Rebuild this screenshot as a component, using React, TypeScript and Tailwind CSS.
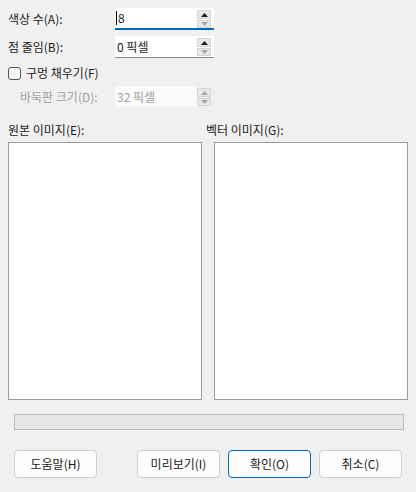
import React from "react";

function Spin({ upOn, downOn }: { upOn: boolean; downOn: boolean }) {
  return (
    <div className="flex flex-col gap-[1px] ml-auto mr-[3px] mt-[2px] self-start">
      <div className="w-[14px] h-[9px] bg-[#e8e8e8] border border-[#d4d4d4] flex items-center justify-center">
        <svg width="7" height="4" viewBox="0 0 7 4">
          <polygon points="3.5,0 7,4 0,4" fill={upOn ? "#1a1a1a" : "#a8a8a8"} />
        </svg>
      </div>
      <div className="w-[14px] h-[8px] bg-[#e8e8e8] border border-[#d4d4d4] flex items-center justify-center">
        <svg width="7" height="4" viewBox="0 0 7 4">
          <polygon points="0,0 7,0 3.5,4" fill={downOn ? "#1a1a1a" : "#a8a8a8"} />
        </svg>
      </div>
    </div>
  );
}

function Btn({ label, primary }: { label: string; primary?: boolean }) {
  return (
    <div
      className={
        primary
          ? "w-[83px] h-[28px] rounded-[4px] border border-[#0067c0] bg-[#fdfdfd] flex items-center justify-center text-[12px] text-[#1b1b1b]"
          : "w-[83px] h-[28px] rounded-[4px] border border-[#d0d0d0] bg-[#fdfdfd] flex items-center justify-center text-[12px] text-[#1b1b1b]"
      }
    >
      {label}
    </div>
  );
}

export default function App() {
  return (
    <div
      className="w-[416px] h-[492px] bg-[#f0f0f0] text-[12px] text-[#1b1b1b] flex flex-col"
      style={{ fontFamily: '"Noto Sans CJK KR", "Noto Sans", sans-serif' }}
    >
      {/* row 1 */}
      <div className="flex items-center h-[22px] mt-[8px]">
        <div className="w-[115px] pl-[8px] leading-none">색상 수(A):</div>
        <div className="w-[99px] h-[22px] bg-white border-b-2 border-[#0067c0] flex items-center">
          <div className="flex items-center pl-[1px] h-full">
            <div className="w-[1px] h-[14px] bg-black" />
            <span className="ml-[1px] leading-none">8</span>
          </div>
          <Spin upOn={true} downOn={false} />
        </div>
      </div>
      {/* row 2 */}
      <div className="flex items-center h-[22px] mt-[6px]">
        <div className="w-[115px] pl-[8px] leading-none">점 줄임(B):</div>
        <div className="w-[99px] h-[22px] bg-white border-b border-[#8a8a8a] flex items-center">
          <span className="pl-[2px] leading-none">0 픽셀</span>
          <Spin upOn={true} downOn={false} />
        </div>
      </div>
      {/* checkbox */}
      <div className="flex items-center h-[14px] mt-[8px] pl-[8px]">
        <div className="w-[13px] h-[13px] rounded-[3px] border border-[#555] bg-[#f6f6f6]" />
        <span className="ml-[5px] leading-none">구멍 채우기(F)</span>
      </div>
      {/* row 4 disabled */}
      <div className="flex items-center h-[21px] mt-[6px] text-[#a0a0a0]">
        <div className="w-[115px] pl-[20px] leading-none">바둑판 크기(D):</div>
        <div className="w-[99px] h-[21px] flex items-center">
          <div className="w-[82px] h-[21px] bg-[#fafafa] flex items-center">
            <span className="pl-[2px] leading-none">32 픽셀</span>
          </div>
          <Spin upOn={false} downOn={false} />
        </div>
      </div>
      {/* labels */}
      <div className="flex h-[14px] mt-[16px] items-center">
        <div className="w-[206px] pl-[8px] leading-none">원본 이미지(E):</div>
        <div className="leading-none">벡터 이미지(G):</div>
      </div>
      {/* panels */}
      <div className="flex gap-[12px] pl-[8px] mt-[5px]">
        <div className="w-[194px] h-[258px] bg-white border border-[#999]" />
        <div className="w-[194px] h-[258px] bg-white border border-[#999]" />
      </div>
      {/* progress */}
      <div className="ml-[14px] mt-[14px] w-[390px] h-[16px] bg-[#e6e6e6] border border-[#bcbcbc]" />
      {/* buttons */}
      <div className="flex pl-[14px] mt-[20px]">
        <Btn label="도움말(H)" />
        <div className="ml-[40px] flex gap-[8px]">
          <Btn label="미리보기(I)" />
          <Btn label="확인(O)" primary />
          <Btn label="취소(C)" />
        </div>
      </div>
    </div>
  );
}
